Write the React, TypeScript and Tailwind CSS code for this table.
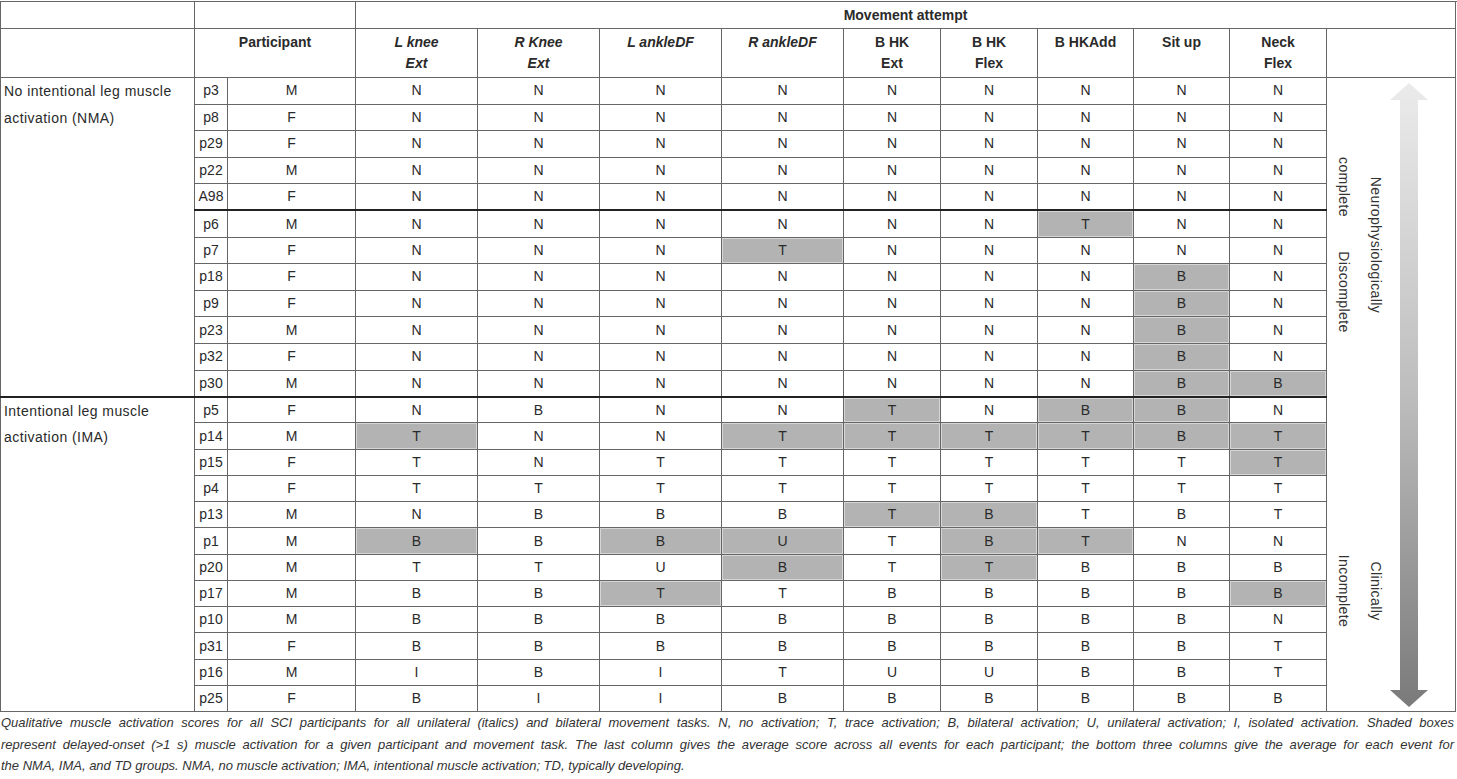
import React from "react";

// one entry per participant: id, sex, then 9 movement scores ("*" = shaded / delayed onset)
const nma: string[][] = [
  ["p3", "M", "N", "N", "N", "N", "N", "N", "N", "N", "N"],
  ["p8", "F", "N", "N", "N", "N", "N", "N", "N", "N", "N"],
  ["p29", "F", "N", "N", "N", "N", "N", "N", "N", "N", "N"],
  ["p22", "M", "N", "N", "N", "N", "N", "N", "N", "N", "N"],
  ["A98", "F", "N", "N", "N", "N", "N", "N", "N", "N", "N"],
  ["p6", "M", "N", "N", "N", "N", "N", "N", "T*", "N", "N"],
  ["p7", "F", "N", "N", "N", "T*", "N", "N", "N", "N", "N"],
  ["p18", "F", "N", "N", "N", "N", "N", "N", "N", "B*", "N"],
  ["p9", "F", "N", "N", "N", "N", "N", "N", "N", "B*", "N"],
  ["p23", "M", "N", "N", "N", "N", "N", "N", "N", "B*", "N"],
  ["p32", "F", "N", "N", "N", "N", "N", "N", "N", "B*", "N"],
  ["p30", "M", "N", "N", "N", "N", "N", "N", "N", "B*", "B*"],
];

const ima: string[][] = [
  ["p5", "F", "N", "B", "N", "N", "T*", "N", "B*", "B*", "N"],
  ["p14", "M", "T*", "N", "N", "T*", "T*", "T*", "T*", "B*", "T*"],
  ["p15", "F", "T", "N", "T", "T", "T", "T", "T", "T", "T*"],
  ["p4", "F", "T", "T", "T", "T", "T", "T", "T", "T", "T"],
  ["p13", "M", "N", "B", "B", "B", "T*", "B*", "T", "B", "T"],
  ["p1", "M", "B*", "B", "B*", "U*", "T", "B*", "T*", "N", "N"],
  ["p20", "M", "T", "T", "U", "B*", "T", "T*", "B", "B", "B"],
  ["p17", "M", "B", "B", "T*", "T", "B", "B", "B", "B", "B*"],
  ["p10", "M", "B", "B", "B", "B", "B", "B", "B", "B", "N"],
  ["p31", "F", "B", "B", "B", "B", "B", "B", "B", "B", "T"],
  ["p16", "M", "I", "B", "I", "T", "U", "U", "B", "B", "T"],
  ["p25", "F", "B", "I", "I", "B", "B", "B", "B", "B", "B"],
];

const headers = [
  { a: "L knee", b: "Ext", italic: true },
  { a: "R Knee", b: "Ext", italic: true },
  { a: "L ankleDF", b: "", italic: true },
  { a: "R ankleDF", b: "", italic: true },
  { a: "B HK", b: "Ext", italic: false },
  { a: "B HK", b: "Flex", italic: false },
  { a: "B HKAdd", b: "", italic: false },
  { a: "Sit up", b: "", italic: false },
  { a: "Neck", b: "Flex", italic: false },
];

const cell = "border border-[#666] text-center p-0";

function Score({ v, thick }: { v: string; thick: boolean }) {
  const shaded = v.endsWith("*");
  return (
    <td
      className={
        cell +
        (thick ? " border-t-2 border-t-[#222]" : "") +
        (shaded ? " bg-[#b3b3b3] shadow-[inset_0_0_0_1px_#d6d6d6]" : "")
      }
    >
      {v.replace("*", "")}
    </td>
  );
}

function Arrow() {
  return (
    <svg width="129" height="634" viewBox="0 0 129 634" className="absolute left-0 top-0">
      <defs>
        <linearGradient id="arrowFill" x1="0" y1="0" x2="0" y2="1">
          <stop offset="0" stopColor="#ebebeb" />
          <stop offset="0.5" stopColor="#bdbdbd" />
          <stop offset="1" stopColor="#7a7a7a" />
        </linearGradient>
      </defs>
      <path
        d="M82 5 L101 22 L91 22 L91 612 L101 612 L82 629 L63 612 L73 612 L73 22 L63 22 Z"
        fill="url(#arrowFill)"
      />
    </svg>
  );
}

const vtext = "absolute [writing-mode:vertical-rl] whitespace-nowrap text-[14px] tracking-[0.4px] text-[#333] -translate-x-1/2 -translate-y-1/2";

function GroupRows({ rows, label, first }: { rows: string[][]; label: string; first: boolean }) {
  return (
    <>
      {rows.map((r, i) => {
        const thickTop = (first && r[0] === "p6") || (!first && i === 0);
        const top = thickTop ? " border-t-2 border-t-[#222]" : "";
        return (
          <tr key={r[0]} className={first ? "h-[26.6px]" : "h-[26.25px]"}>
            {i === 0 && (
              <td
                rowSpan={12}
                className={"border border-[#666] align-top text-left px-[3px] leading-[26.5px] tracking-[0.45px]" + (first ? "" : " border-t-2 border-t-[#222]")}
              >
                {label}
              </td>
            )}
            <td className={cell + top}>{r[0]}</td>
            <td className={cell + top}>{r[1]}</td>
            {r.slice(2).map((v, j) => (
              <Score key={j} v={v} thick={thickTop} />
            ))}
            {first && i === 0 && (
              <td rowSpan={24} className="border border-[#666] relative p-0 align-top">
                <Arrow />
                <span className={vtext + " left-[48px] top-[167px]"}>Neurophysiologically</span>
                <span className={vtext + " left-[16px] top-[109px]"}>complete</span>
                <span className={vtext + " left-[16px] top-[214px]"}>Discomplete</span>
                <span className={vtext + " left-[48px] top-[513px]"}>Clinically</span>
                <span className={vtext + " left-[16px] top-[513px]"}>Incomplete</span>
              </td>
            )}
          </tr>
        );
      })}
    </>
  );
}

export default function App() {
  return (
    <div className="w-[1457px] h-[779px] bg-white overflow-hidden font-['Liberation_Sans',Arial,sans-serif] text-[#2a2a2a]">
      <table className="table-fixed border-collapse w-[1455px] text-[14px] mt-px">
        <colgroup>
          <col className="w-[194px]" />
          <col className="w-[33px]" />
          <col className="w-[128px]" />
          <col className="w-[122px]" />
          <col className="w-[122px]" />
          <col className="w-[122px]" />
          <col className="w-[122px]" />
          <col className="w-[97px]" />
          <col className="w-[97px]" />
          <col className="w-[96px]" />
          <col className="w-[96px]" />
          <col className="w-[97px]" />
          <col className="w-[129px]" />
        </colgroup>
        <thead>
          <tr className="h-[27px]">
            <td className="border border-[#666]" />
            <td colSpan={2} className="border border-[#666]" />
            <td colSpan={11} className="border border-[#666] text-center font-bold">
              Movement attempt
            </td>
          </tr>
          <tr className="h-[49px]">
            <td className="border border-[#666]" />
            <td colSpan={2} className="border border-[#666] text-center font-bold align-top pt-[3px] leading-[21px]">
              Participant
            </td>
            {headers.map((h, i) => (
              <td
                key={i}
                className={
                  "border border-[#666] text-center font-bold align-top pt-[3px] leading-[21px]" +
                  (h.italic ? " italic" : "")
                }
              >
                <div>{h.a}</div>
                {h.b && <div>{h.b}</div>}
              </td>
            ))}
            <td className="border border-[#666]" />
          </tr>
        </thead>
        <tbody>
          <GroupRows rows={nma} label="No intentional leg muscle activation (NMA)" first={true} />
          <GroupRows rows={ima} label="Intentional leg muscle activation (IMA)" first={false} />
        </tbody>
      </table>
      <div className="italic text-[13px] leading-[21.5px] text-[#333] pl-[1px] pr-[3px]">
        <div className="text-justify [text-align-last:justify] whitespace-nowrap">
          Qualitative muscle activation scores for all SCI participants for all unilateral (italics) and bilateral movement tasks. N, no activation; T, trace activation; B, bilateral activation; U, unilateral activation; I, isolated activation. Shaded boxes
        </div>
        <div className="text-justify [text-align-last:justify] whitespace-nowrap">
          represent delayed-onset (&gt;1 s) muscle activation for a given participant and movement task. The last column gives the average score across all events for each participant; the bottom three columns give the average for each event for
        </div>
        <div className="whitespace-nowrap">
          the NMA, IMA, and TD groups. NMA, no muscle activation; IMA, intentional muscle activation; TD, typically developing.
        </div>
      </div>
    </div>
  );
}
